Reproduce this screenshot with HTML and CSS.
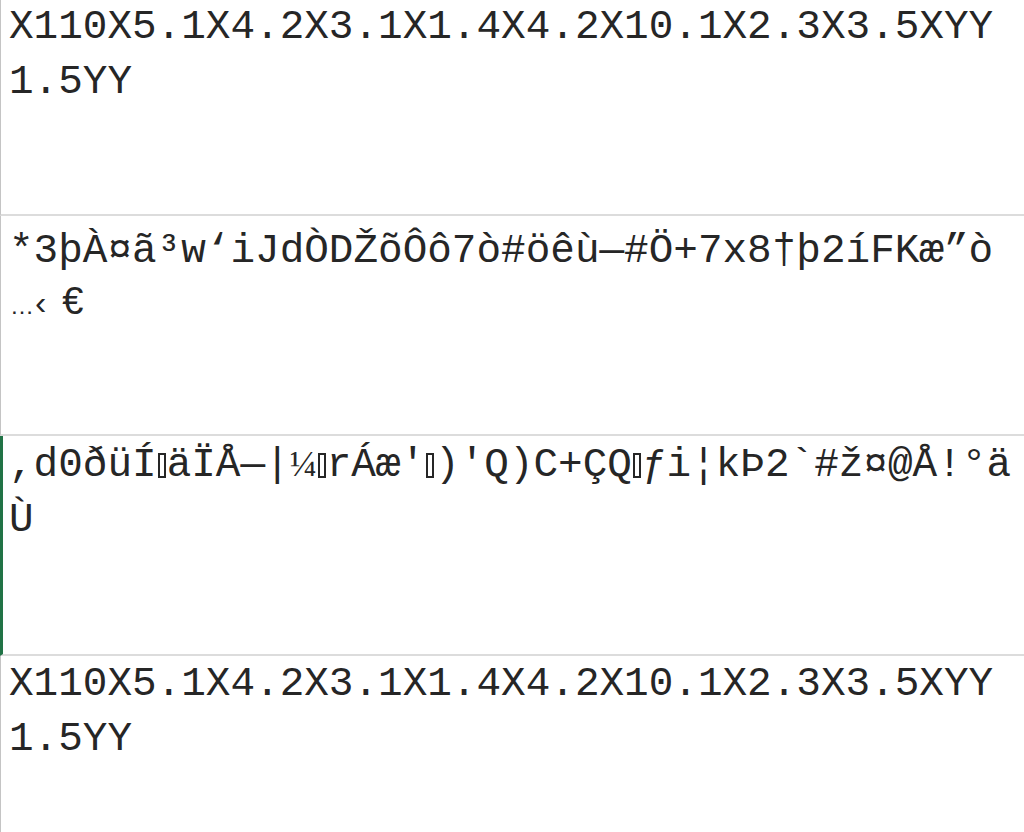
FILE: index.html
```html
<!DOCTYPE html>
<html>
<head>
<meta charset="utf-8">
<link rel="stylesheet" href="styles.css">
</head>
<body>
<div class="sheet">
  <div class="cell first">
    <div class="ln">X110X5.1X4.2X3.1X1.4X4.2X10.1X2.3X3.5XYY</div>
    <div class="ln">1.5YY</div>
  </div>
  <div class="cell second">
    <div class="ln">*3þÀ¤ã³w‘iJdÒDŽõÔô7ò#öêù—#Ö+7x8†þ2íFKæ”ò</div>
    <div class="ln"><span class="ell">…</span><span class="quo">‹</span><span class="euro">€</span></div>
  </div>
  <div class="cell sel">
    <div class="ln">,d0ðüÍ<span class="tofu"></span>äÏÅ—|<span class="frac">¼</span><span class="tofu"></span>rÁæ'<span class="tofu"></span>)'Q)C+ÇQ<span class="tofu"></span>ƒi¦kÞ2`#ž¤@Å!°ä</div>
    <div class="ln">Ù</div>
  </div>
  <div class="cell">
    <div class="ln">X110X5.1X4.2X3.1X1.4X4.2X10.1X2.3X3.5XYY</div>
    <div class="ln">1.5YY</div>
  </div>
</div>
</body>
</html>
```

FILE: styles.css
```css
html, body {
  margin: 0;
  padding: 0;
  background: #ffffff;
}

.sheet {
  height: 832px;
  overflow: hidden;
}

.cell {
  box-sizing: border-box;
  height: 220px;
  padding: 1px 0 0 8px;
  border-left: 1px solid #c4c4c4;
  border-bottom: 2px solid #dcdcdc;
  font-family: "Liberation Mono", "Courier New", monospace;
  font-size: 41px;
  line-height: 55px;
  color: #262626;
}

.ln {
  white-space: pre;
}

.cell.first {
  height: 216px;
  padding-top: 0;
}

.cell.second {
  padding-top: 10px;
  line-height: 50px;
}

.cell.sel {
  border-left: 3px solid #217346;
  padding-left: 6px;
}

.ell,
.quo,
.euro {
  font-family: "Liberation Sans", Arial, sans-serif;
}

.ell {
  font-size: 24px;
  margin-left: 1px;
}

.quo {
  font-size: 34px;
  margin-left: 1px;
}

.euro {
  font-size: 38px;
  margin-left: 16px;
}

.frac {
  font-family: "Liberation Serif", serif;
  font-size: 36px;
}

.tofu {
  display: inline-block;
  box-sizing: border-box;
  width: 8px;
  height: 25px;
  margin: 0 1px;
  border: 2px solid #262626;
  vertical-align: -2px;
}
```
